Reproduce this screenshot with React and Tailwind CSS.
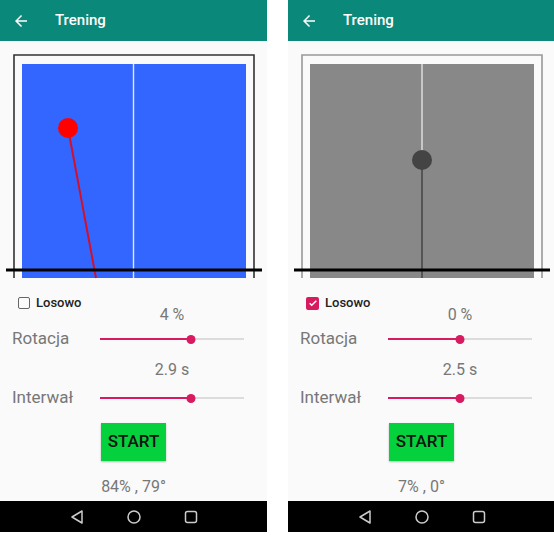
import React from "react";

const font = { fontFamily: "Roboto, 'Noto Sans', sans-serif" };

const Table = ({ active }) => {
  const line = active ? "#333" : "#999";
  return (
    <svg width="267" height="252" className="block">
      <rect x="22" y="23" width="224" height="214" fill={active ? "#3366ff" : "#888888"} />
      <polyline points="14,237 14,14 254,14 254,237" fill="none" stroke={line} strokeWidth="1.6" />
      {active ? (
        <>
          <line x1="133.5" y1="23" x2="133.5" y2="237" stroke="#e6e6e6" strokeWidth="1.4" />
          <line x1="68" y1="87" x2="96" y2="237" stroke="#d3102c" strokeWidth="2" />
          <circle cx="68" cy="87" r="10" fill="#ff0000" />
        </>
      ) : (
        <>
          <line x1="134" y1="23" x2="134" y2="119" stroke="#d8d8d8" strokeWidth="1.6" />
          <line x1="134" y1="119" x2="134" y2="237" stroke="#555" strokeWidth="2" />
          <circle cx="134" cy="119" r="10" fill="#444" />
        </>
      )}
      <line x1="6" y1="229" x2="262" y2="229" stroke="#000" strokeWidth="3" />
    </svg>
  );
};

const Slider = ({ value }) => (
  <div className="relative w-[144px] h-[10px] flex items-center">
    <div className="w-full h-[2px] bg-[#dcdcdc]" />
    <div className="absolute left-0 h-[2px] bg-[#d81b60]" style={{ width: `${value * 100}%` }} />
    <div
      className="absolute w-[9px] h-[9px] rounded-full bg-[#d81b60] -translate-x-1/2"
      style={{ left: `${value * 100}%` }}
    />
  </div>
);

const Phone = ({ active, checked, rot, rotVal, interval, intVal, result }) => (
  <div className="flex flex-col w-[267px] h-[532px]" style={font}>
    <div className="h-[41px] bg-[#0a887a] flex items-center text-white">
      <svg width="18" height="18" viewBox="0 0 24 24" className="ml-[12px]" fill="#fff">
        <path d="M20 11H7.83l5.59-5.59L12 4l-8 8 8 8 1.41-1.41L7.83 13H20v-2z" />
      </svg>
      <span className="ml-[25px] text-[15px] font-medium">Trening</span>
    </div>
    <div className="flex-1 bg-[#fafafa] flex flex-col">
      <Table active={active} />
      <div className="h-[20px] flex items-center pl-[18px]">
        {checked ? (
          <div className="w-[13px] h-[13px] rounded-[2px] bg-[#d81b60] flex items-center justify-center">
            <svg width="10" height="10" viewBox="0 0 24 24">
              <path d="M4 12.5l5 5L20 6.5" fill="none" stroke="#fff" strokeWidth="3.5" />
            </svg>
          </div>
        ) : (
          <div className="w-[12px] h-[12px] rounded-[2px] border-[1.5px] border-[#666]" />
        )}
        <span className="ml-[6px] text-[13px] font-medium text-[#222]">Losowo</span>
      </div>
      <div className="-mt-[8px] h-[20px] flex items-center">
        <span className="ml-[100px] w-[144px] text-center text-[16px] text-[#777]">{rot}</span>
      </div>
      <div className="h-[28px] flex items-center">
        <span className="w-[100px] pl-[12px] text-[17px] text-[#777]">Rotacja</span>
        <Slider value={rotVal} />
      </div>
      <div className="mt-[7px] h-[20px] flex items-center">
        <span className="ml-[100px] w-[144px] text-center text-[16px] text-[#777]">{interval}</span>
      </div>
      <div className="mt-[4px] h-[28px] flex items-center">
        <span className="w-[100px] pl-[12px] text-[17px] text-[#777]">Interwał</span>
        <Slider value={intVal} />
      </div>
      <div className="mt-[11px] flex justify-center">
        <div className="w-[65px] h-[38px] bg-[#05d13c] flex items-center justify-center text-[17px] font-medium text-[#111] shadow-[0_1px_2px_rgba(0,0,0,0.25)]">
          START
        </div>
      </div>
      <div className="mt-[16px] h-[20px] flex items-center justify-center text-[16px] text-[#777]">
        {result}
      </div>
    </div>
    <div className="h-[31px] bg-black flex items-center justify-center gap-[41px]">
      <svg width="16" height="16" viewBox="0 0 16 16">
        <path d="M13 2 L3 8 L13 14 Z" fill="none" stroke="#ccc" strokeWidth="1.5" strokeLinejoin="round" />
      </svg>
      <svg width="16" height="16" viewBox="0 0 16 16">
        <circle cx="8" cy="8" r="6" fill="none" stroke="#ccc" strokeWidth="1.5" />
      </svg>
      <svg width="16" height="16" viewBox="0 0 16 16">
        <rect x="2.5" y="2.5" width="11" height="11" rx="2" fill="none" stroke="#ccc" strokeWidth="1.5" />
      </svg>
    </div>
  </div>
);

export default function App() {
  return (
    <div className="w-[554px] h-[543px] bg-white flex gap-[21px]">
      <Phone active checked={false} rot="4 %" rotVal={0.63} interval="2.9 s" intVal={0.63} result="84% , 79°" />
      <Phone active={false} checked rot="0 %" rotVal={0.5} interval="2.5 s" intVal={0.5} result="7% , 0°" />
    </div>
  );
}
